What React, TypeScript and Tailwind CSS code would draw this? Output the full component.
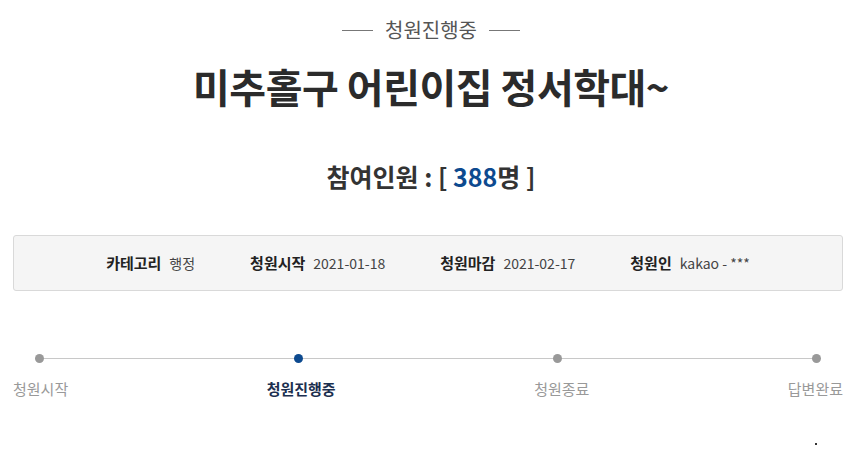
const font = { fontFamily: '"Noto Sans CJK KR", "Noto Sans", sans-serif' };

const info = [
  { label: "카테고리", value: "행정" },
  { label: "청원시작", value: "2021-01-18" },
  { label: "청원마감", value: "2021-02-17" },
  { label: "청원인", value: "kakao - ***" },
];

const steps = [
  { label: "청원시작", active: false },
  { label: "청원진행중", active: true },
  { label: "청원종료", active: false },
  { label: "답변완료", active: false },
];

export default function App() {
  return (
    <div className="w-[862px] h-[454px] bg-white text-[#333] overflow-hidden" style={font}>
      <div className="flex items-center justify-center gap-[12px] pt-[17px]">
        <span className="w-[31px] h-px bg-[#777]" />
        <span className="text-[20px] leading-[26px] text-[#555]">청원진행중</span>
        <span className="w-[31px] h-px bg-[#777]" />
      </div>

      <h1 className="mt-[19px] text-center text-[40px] leading-[48px] font-bold text-[#2b2b2b] tracking-[-0.5px]">
        미추홀구 어린이집 정서학대~
      </h1>

      <div className="mt-[49px] text-center text-[25px] leading-[34px] font-bold text-[#333]">
        참여인원 : [ <span className="text-[#0d4a8f]">388</span>명 ]
      </div>

      <div className="ml-[13px] w-[830px] mt-[42px] h-[56px] rounded-[3px] border border-[#d9d9d9] bg-[#f5f5f5] flex items-center justify-center gap-[55px]">
        {info.map((i) => (
          <div key={i.label} className="flex items-center gap-[8px]">
            <span className="font-bold text-[15px] text-[#222]">{i.label}</span>
            <span className="text-[14px] text-[#444]">{i.value}</span>
          </div>
        ))}
      </div>

      <div className="ml-[13px] w-[830px] mt-[62px]">
        <div className="relative mx-[22px] h-[10px] flex items-center justify-between">
          <div className="absolute left-0 right-0 top-1/2 h-px bg-[#c8c8c8]" />
          {[0, 1, 2, 3].map((n) => (
            <span
              key={n}
              className={
                n === 1
                  ? "relative w-[9px] h-[9px] rounded-full bg-[#0d4a8f]"
                  : "relative w-[9px] h-[9px] rounded-full bg-[#999]"
              }
            />
          ))}
        </div>
        <div className="mt-[15px] flex justify-between text-[15px]">
          {steps.map((s) => (
            <span
              key={s.label}
              className={s.active ? "font-bold text-[#1c2f4f]" : "text-[#999]"}
            >
              {s.label}
            </span>
          ))}
        </div>
      </div>

      <div className="mt-[42px] flex justify-end pr-[45px]">
        <span className="w-[2px] h-[2px] bg-[#333]" />
      </div>
    </div>
  );
}
